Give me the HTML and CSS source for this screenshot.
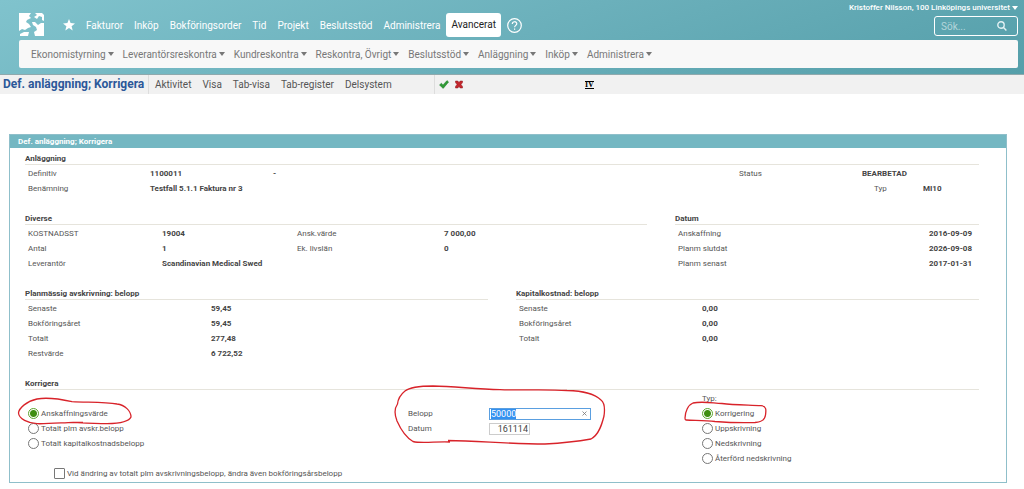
FILE: index.html
```html
<!DOCTYPE html>
<html lang="sv">

<head>
  <meta charset="UTF-8">
  <meta name="viewport" content="width=device-width, initial-scale=1.0">
  <title>Def. anläggning; Korrigera</title>
  <link rel="stylesheet" href="styles.css">
</head>

<body>
  <header class="header">
    <div class="top-row">
      <a href="#" class="logo" aria-label="Start">
        <svg width="26" height="25" viewBox="0 0 26 25" fill="#fff">
          <path d="M0 1H12L10 4L12 6L8 8L7 10L10 12L12 15L9 16L6 18L3 17L0 19Z" />
          <path d="M16 1H23L25 3V9L23 8V5L20 4L18 7L15 5L18 3Z" />
          <path d="M13 10L16 10L19 13L22 11L25 11V24H16L15 20L18 18L17 15L14 13Z" />
          <path d="M1 22L5 20L10 20L9 24H1Z" />
        </svg>
      </a>
      <nav class="main-nav">
        <a href="#" class="star" aria-label="Favoriter">
          <svg width="12" height="12" viewBox="0 0 12 12" fill="#fff">
            <path d="M6 0L7.6 4.1L12 4.4L8.6 7.2L9.7 11.5L6 9.1L2.3 11.5L3.4 7.2L0 4.4L4.4 4.1Z" />
          </svg>
        </a>
        <a href="#">Fakturor</a>
        <a href="#">Inköp</a>
        <a href="#">Bokföringsorder</a>
        <a href="#">Tid</a>
        <a href="#">Projekt</a>
        <a href="#">Beslutsstöd</a>
        <a href="#">Administrera</a>
        <a href="#" class="active">Avancerat</a>
        <a href="#" class="help" aria-label="Hjälp">
          <svg width="15" height="15" viewBox="0 0 15 15" fill="none" stroke="#fff" stroke-width="1.2">
            <circle cx="7.5" cy="7.5" r="6.8" />
            <path d="M5.3 6C5.3 3 9.8 3 9.8 5.8C9.8 7.4 7.6 7.4 7.6 9.3M7.6 10.4V11.7" />
          </svg>
        </a>
      </nav>
      <div class="user-area">
        <a href="#" class="user">Kristoffer Nilsson, 100 Linköpings universitet<i class="caret"></i></a>
        <div class="search">
          <input type="text" placeholder="Sök..." aria-label="Sök">
          <button type="button" aria-label="Sök">
            <svg width="10" height="10" viewBox="0 0 10 10" fill="none" stroke="#e3f2f4" stroke-width="1.4">
              <circle cx="4" cy="4" r="3.2" />
              <path d="M6.3 6.3L9.4 9.4" />
            </svg>
          </button>
        </div>
      </div>
    </div>
    <nav class="sub-nav">
      <a href="#">Ekonomistyrning<i class="caret"></i></a>
      <a href="#">Leverantörsreskontra<i class="caret"></i></a>
      <a href="#">Kundreskontra<i class="caret"></i></a>
      <a href="#">Reskontra, Övrigt<i class="caret"></i></a>
      <a href="#">Beslutsstöd<i class="caret"></i></a>
      <a href="#">Anläggning<i class="caret"></i></a>
      <a href="#">Inköp<i class="caret"></i></a>
      <a href="#">Administrera<i class="caret"></i></a>
    </nav>
  </header>

  <div class="toolbar">
    <h1>Def. anläggning; Korrigera</h1>
    <div class="tools">
      <a href="#">Aktivitet</a>
      <a href="#">Visa</a>
      <a href="#">Tab-visa</a>
      <a href="#">Tab-register</a>
      <a href="#">Delsystem</a>
    </div>
    <div class="actions">
      <button type="button" aria-label="Spara">
        <svg width="10" height="9" viewBox="0 0 10 9">
          <path d="M0.5 5L2.4 3.2L4 4.9L8 0.6L9.6 2L4.2 8.4Z" fill="#2f9a35" stroke="#1f7a28" stroke-width="0.5" />
        </svg>
      </button>
      <button type="button" aria-label="Avbryt">
        <svg width="8" height="9" viewBox="0 0 8 9">
          <path d="M0.5 1H2.8L4 2.6L5.2 1H7.5V2.6L6 4.5L7.5 6.4V8H5.2L4 6.4L2.8 8H0.5V6.4L2 4.5L0.5 2.6Z" fill="#c3272d" stroke="#8d171d" stroke-width="0.5" />
        </svg>
      </button>
    </div>
    <button type="button" class="iv">IV</button>
  </div>

  <main class="panel">
    <h2 class="panel-title">Def. anläggning; Korrigera</h2>
    <form class="panel-body">
      <section>
        <h3>Anläggning</h3>
        <div class="row row-asset">
          <span>Definitiv</span><b>1100011</b><b>-</b><span>Status</span><b>BEARBETAD</b>
        </div>
        <div class="row row-name">
          <span>Benämning</span><b>Testfall 5.1.1 Faktura nr 3</b><span>Typ</span><b>MI10</b>
        </div>
      </section>

      <div class="columns columns-wide">
        <section>
          <h3>Diverse</h3>
          <div class="row row-misc"><span>KOSTNADSST</span><b>19004</b><span>Ansk.värde</span><b>7 000,00</b></div>
          <div class="row row-misc"><span>Antal</span><b>1</b><span>Ek. livslän</span><b>0</b></div>
          <div class="row row-misc"><span>Leverantör</span><b>Scandinavian Medical Swed</b></div>
        </section>
        <section>
          <h3>Datum</h3>
          <div class="row row-date"><span>Anskaffning</span><b>2016-09-09</b></div>
          <div class="row row-date"><span>Planm slutdat</span><b>2026-09-08</b></div>
          <div class="row row-date"><span>Planm senast</span><b>2017-01-31</b></div>
        </section>
      </div>

      <div class="columns">
        <section>
          <h3>Planmässig avskrivning: belopp</h3>
          <div class="row row-amount"><span>Senaste</span><b>59,45</b></div>
          <div class="row row-amount"><span>Bokföringsåret</span><b>59,45</b></div>
          <div class="row row-amount"><span>Totalt</span><b>277,48</b></div>
          <div class="row row-amount"><span>Restvärde</span><b>6 722,52</b></div>
        </section>
        <section>
          <h3>Kapitalkostnad: belopp</h3>
          <div class="row row-amount"><span>Senaste</span><b>0,00</b></div>
          <div class="row row-amount"><span>Bokföringsåret</span><b>0,00</b></div>
          <div class="row row-amount"><span>Totalt</span><b>0,00</b></div>
        </section>
      </div>

      <section>
        <h3>Korrigera</h3>
        <div class="correct">
          <div class="group group-kind">
            <label class="choice"><input type="radio" name="kind" checked>Anskaffningsvärde</label>
            <label class="choice"><input type="radio" name="kind">Totalt plm avskr.belopp</label>
            <label class="choice"><input type="radio" name="kind">Totalt kapitalkostnadsbelopp</label>
            <label class="choice choice-extra"><input type="checkbox">Vid ändring av totalt plm avskrivningsbelopp, ändra även bokföringsårsbelopp</label>
            <svg class="mark mark-kind" width="118" height="30" viewBox="16 396 118 30">
              <path d="M18.5 413C19 408 27 401 37 399C48 397 60 399 72 401.7C88 402.5 105 402 117 404C125 405 131 411 131 417C129 422 116 423.5 107 423.7C95 423.7 85 423 73 422.3C62 422.7 48 424 37 423.7C28 423 19 419 18.5 413M73 422.5H83" />
            </svg>
          </div>
          <div class="group group-value">
            <div class="field">
              <label for="amount">Belopp</label>
              <div class="amount-box">
                <input type="text" id="amount" value="50000">
                <button type="button" aria-label="Rensa">
                  <svg width="5" height="5" viewBox="0 0 5 5" stroke="#777" stroke-width="0.8">
                    <path d="M0.5 0.5L4.5 4.5M4.5 0.5L0.5 4.5" />
                  </svg>
                </button>
              </div>
            </div>
            <div class="field">
              <label for="date">Datum</label>
              <input type="text" id="date" class="date-box" value="161114">
            </div>
            <svg class="mark mark-value" width="214" height="62" viewBox="393 384 214 62">
              <path d="M448 440.5C480 441 510 444 545 444C565 443 580 441 591 439C599 435 602 424 604 416C605 409 605 403 601 400C594 393 583 391 567 390.5C545 389 520 390.5 500 389.7C475 389 455 386.5 433 386C420 386 410 387 405 391C400 395 398 399 397.5 404C394 409 395 416 397 421C401 430 407 438 413 441.5C422 444 438 441 450 442" />
            </svg>
          </div>
          <div class="group group-type">
            <span class="group-label">Typ:</span>
            <label class="choice"><input type="radio" name="type" checked>Korrigering</label>
            <label class="choice"><input type="radio" name="type">Uppskrivning</label>
            <label class="choice"><input type="radio" name="type">Nedskrivning</label>
            <label class="choice"><input type="radio" name="type">Återförd nedskrivning</label>
            <svg class="mark mark-type" width="86" height="26" viewBox="682 400 86 26">
              <path d="M685 418C685 412 688 405 693 403C702 401 712 403 722 403.5C734 405 750 405 761 405.7C767 406 766 411 765.5 415C765 419 763 422 755 422.5C742 423 728 422.5 715 421.5C705 420.5 695 420.5 686 420C685 420 685 419 685 418" />
            </svg>
          </div>
        </div>
      </section>
    </form>
  </main>
  <script>
    // the amount is ready to be overwritten when the page opens
    window.onload = function () {
      let amount = document.getElementById("amount")
      amount.focus()
      amount.select()
    }
  </script>
</body>

</html>
```
FILE: styles.css
```css
* {
  box-sizing: border-box;
}

body {
  margin: 0;
  background-color: #fff;
  color: #555;
  font-family: Roboto, "Liberation Sans", sans-serif;
  font-size: 8px;
}

a {
  color: inherit;
  text-decoration: none;
}

button {
  display: flex;
  padding: 0;
  border: none;
  background: none;
}

input {
  margin: 0;
  font-family: inherit;
}

svg {
  display: block;
}

h1, h2, h3 {
  margin: 0;
}

.caret {
  width: 0;
  height: 0;
  margin-left: 2px;
  border: 3px solid transparent;
  border-top: 4px solid currentColor;
  border-bottom: none;
}

/* Header */

.header {
  padding: 0 6px 6px 19px;
  background: linear-gradient(160deg, #80c3cd 0%, #6bb0bb 50%, #559faa 100%);
  color: #fff;
  border-bottom: 1px solid #8fa9ad;
}

.top-row {
  display: flex;
  height: 40px;
}

.logo {
  padding-top: 12px;
}

.main-nav {
  display: flex;
  align-items: center;
  align-self: flex-start;
  gap: 11px;
  height: 24px;
  margin: 13px 0 0 18px;
  font-size: 10px;
}

.main-nav .active {
  margin: 0 -5px;
  padding: 0 5px;
  border-radius: 3px;
  background-color: #fff;
  color: #222;
  line-height: 24px;
}

.user-area {
  display: flex;
  flex-direction: column;
  align-items: flex-end;
  gap: 2px;
  margin-left: auto;
  padding-top: 2px;
}

.user {
  display: flex;
  align-items: center;
  font-weight: 500;
  line-height: 12px;
}

.search {
  display: flex;
  align-items: center;
  width: 84px;
  height: 20px;
  padding: 0 10px 0 6px;
  border: 1px solid #fff;
  border-radius: 3px;
}

.search input {
  flex: 1;
  min-width: 0;
  padding: 0;
  border: none;
  outline: none;
  background: none;
  color: #fff;
  font-size: 10px;
}

.search input::placeholder {
  color: #b4d6db;
}

.sub-nav {
  display: flex;
  align-items: center;
  gap: 9px;
  height: 28px;
  padding: 0 12px;
  border-radius: 2px;
  background-color: #f8f8f8;
  color: #777;
  font-size: 10px;
}

.sub-nav a {
  display: flex;
  align-items: center;
}

/* Toolbar */

.toolbar {
  display: flex;
  align-items: center;
  height: 19px;
  background-color: #f1f1f1;
}

.toolbar h1 {
  width: 149px;
  padding-left: 3px;
  border-right: 1px solid #ddd;
  color: #2c5899;
  font-size: 12px;
  line-height: 19px;
}

.tools {
  display: flex;
  gap: 11px;
  width: 286px;
  padding-left: 6px;
  border-right: 1px solid #ddd;
  font-size: 10px;
  line-height: 19px;
}

.actions {
  display: flex;
  gap: 6px;
  padding-left: 4px;
}

.iv {
  margin-left: 122px;
  border-top: 1px solid #000;
  border-bottom: 1px solid #000;
  color: #000;
  font-family: "Liberation Serif", serif;
  font-size: 8px;
  font-weight: bold;
  line-height: 6px;
}

/* Panel */

.panel {
  margin: 40px 17px 6px 9px;
  border: 1px solid #8fbfca;
}

.panel-title {
  padding-left: 8px;
  background-color: #74b7c2;
  color: #fff;
  font-size: 8px;
  line-height: 13px;
}

.panel-body {
  display: flex;
  flex-direction: column;
  gap: 18px;
  padding: 6px 27px 1px 15px;
}

h3 {
  margin-bottom: 1px;
  border-bottom: 1px solid #e6e4dc;
  color: #444;
  font-size: 8px;
  line-height: 10px;
}

.columns {
  display: grid;
  grid-template-columns: 1fr 1fr;
  gap: 28px;
}

.columns-wide {
  grid-template-columns: 622fr 304fr;
}

.row {
  display: grid;
  padding-left: 3px;
  line-height: 15px;
  white-space: nowrap;
}

.row b {
  color: #444;
}

.row-asset {
  grid-template-columns: 122fr 123fr 466fr 123fr 117fr;
}

.row-name {
  grid-template-columns: 122fr 724fr 49fr 56fr;
}

.row-misc {
  grid-template-columns: 134fr 135fr 147fr 203fr;
}

.row-date {
  grid-template-columns: 1fr auto;
  padding-right: 7px;
}

.row-amount {
  grid-template-columns: 183fr 277fr;
}

/* Correction */

.correct {
  display: grid;
  grid-template-columns: 380fr 294fr 280fr;
  line-height: 15px;
}

.group {
  position: relative;
  padding-left: 3px;
}

.group-kind,
.group-value {
  padding-top: 15px;
}

.group-label {
  display: block;
}

.choice {
  display: flex;
  align-items: center;
  gap: 2px;
  height: 15px;
  white-space: nowrap;
}

.choice input {
  appearance: none;
  width: 11px;
  height: 11px;
  border: 1px solid #777;
  background-color: #fff;
}

.choice input[type=radio] {
  border-radius: 50%;
}

.choice input[type=radio]:checked {
  border-color: #5aa52e;
  background: radial-gradient(circle, #3f8f12 0 3px, #fff 4px);
}

.choice input[type=checkbox] {
  border-radius: 1px;
}

.choice-extra {
  margin: 15px 0 0 26px;
}

.field {
  display: flex;
  align-items: center;
  height: 15px;
}

.field label {
  width: 81px;
}

.amount-box {
  display: flex;
  align-items: center;
  width: 102px;
  height: 12px;
  padding: 0 3px 0 1px;
  border: 1px solid #5a9fe0;
}

.amount-box input {
  flex: 1;
  min-width: 0;
  padding: 0;
  border: none;
  outline: none;
  color: #444;
  font-size: 9px;
  line-height: 10px;
}

.amount-box input::selection {
  background-color: #3390f0;
  color: #fff;
}

.date-box {
  width: 41px;
  height: 12px;
  padding: 0 1px;
  border: 1px solid #ccc;
  color: #444;
  font-size: 9px;
  text-align: right;
}

/* Hand-drawn marks over the form */

.mark {
  position: absolute;
  fill: none;
  stroke: #d8232a;
  stroke-width: 1.3;
  pointer-events: none;
}

.mark-kind {
  top: 5px;
  left: -9px;
}

.mark-value {
  top: -7px;
  left: -12px;
}

.mark-type {
  top: 9px;
  left: -17px;
}
```
